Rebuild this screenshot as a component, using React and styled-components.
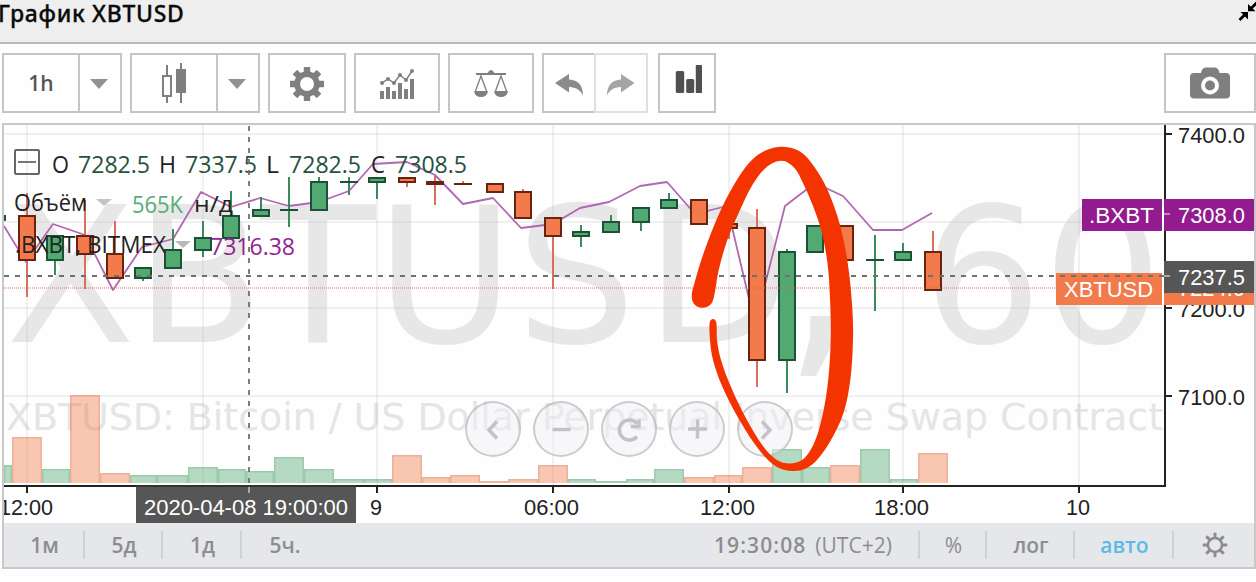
import React from 'react';
import styled, { createGlobalStyle } from 'styled-components';

const GlobalStyle = createGlobalStyle`
  * { box-sizing: border-box; }
  body { margin: 0; background: #fefefe; overflow: hidden; }
  button { font: inherit; padding: 0; margin: 0; background: none; border: 0; }
`;

const UI_FONT = '"Open Sans", "Noto Sans", sans-serif';
const AXIS_FONT = '"Liberation Sans", Arial, sans-serif';
const MARK_FONT = '"DejaVu Sans", Verdana, sans-serif';

const Page = styled.div`
  width: 1256px;
  height: 582px;
  display: flex;
  flex-direction: column;
  overflow: hidden;
  font-family: ${UI_FONT};
`;

const Header = styled.header`
  height: 44px;
  flex: none;
  display: flex;
  justify-content: space-between;
  background: #eee;
  border-bottom: 2px solid #b9b9b9;
`;

const Title = styled.h1`
  margin: 0 0 0 -2px;
  font: 500 23px/27px "Noto Sans", sans-serif;
  letter-spacing: 0.65px;
  color: #0b0b0b;
  -webkit-text-stroke: 0.3px #0b0b0b;
  white-space: nowrap;
`;

const Toolbar = styled.div`
  height: 79px;
  flex: none;
  display: flex;
  align-items: flex-start;
  gap: 8px;
  padding: 9px 0 0 2px;
`;

const Group = styled.div`
  display: flex;
  margin-left: ${(p) => p.$push || '0'};
`;

const ToolButton = styled.button`
  width: ${(p) => p.$w}px;
  height: 60px;
  display: flex;
  align-items: center;
  justify-content: center;
  border: 2px solid ${(p) => (p.$dim ? '#dedfe1' : '#c5c5c5')};
  color: ${(p) => (p.$dim ? '#a6a6a6' : '#7f7f7f')};
  & + & { margin-left: -2px; }
  svg { display: block; }
`;

const Interval = styled.span`
  font-size: 21px;
  font-weight: 600;
  line-height: 30px;
  color: #555;
`;

const Frame = styled.section`
  height: 446px;
  flex: none;
  margin-left: 2px;
  display: flex;
  flex-direction: column;
  border: 2px solid #c8c8c8;
`;

const ChartArea = styled.div`
  position: relative;
  height: 398px;
  flex: none;
  svg { display: block; }
`;

const Controls = styled.nav`
  position: absolute;
  left: 461px;
  top: 276px;
  display: flex;
  gap: 12px;
`;

const RoundButton = styled.button`
  width: 56px;
  height: 56px;
  border-radius: 50%;
  border: 2px solid rgba(150, 150, 155, 0.45);
  background: rgba(240, 240, 245, 0.5);
`;

const Annotation = styled.svg`
  position: absolute;
  inset: 0;
  pointer-events: none;
`;

const Footer = styled.footer`
  height: 44px;
  flex: none;
  display: flex;
  align-items: center;
  background: #e6e7eb;
  color: #8d8d90;
  font-size: 21px;
  line-height: 28px;
`;

const Cell = styled.span`
  width: ${(p) => p.$w}px;
  height: 28px;
  display: flex;
  align-items: center;
  justify-content: center;
  padding-left: 2px;
  font-weight: ${(p) => p.$weight || 600};
  color: ${(p) => (p.$active ? '#5bbae6' : 'inherit')};
  border-left: ${(p) => (p.$first ? '0' : '2px solid #cdd1d9')};
`;

const Clock = styled.span`
  margin-left: auto;
  width: 204px;
  display: flex;
  gap: 9px;
  white-space: nowrap;
  strong { font-weight: 600; letter-spacing: 1.1px; }
`;

const CANDLES = [
  [27, 'r', 215, 261, 193, 297], [55, 'g', 235, 261, 235, 275], [85, 'r', 235, 255, 200, 289],
  [115, 'r', 253, 279, 221, 279], [143, 'g', 267, 279, 267, 281], [173, 'g', 249, 269, 229, 269],
  [203, 'g', 237, 251, 221, 257], [231, 'g', 215, 239, 191, 239], [261, 'g', 209, 217, 197, 217],
  [289, 'g', 209, 211, 177, 227], [319, 'g', 181, 211, 177, 211], [349, 'g', 181, 183, 177, 195],
  [377, 'g', 177, 183, 177, 199], [407, 'r', 177, 183, 177, 187], [435, 'r', 181, 185, 176, 205],
  [463, 'r', 183, 185, 181, 185], [495, 'r', 183, 193, 183, 193], [523, 'r', 191, 219, 189, 219],
  [553, 'r', 217, 237, 217, 289], [581, 'g', 231, 237, 225, 247], [611, 'g', 221, 233, 215, 233],
  [641, 'g', 207, 223, 207, 231], [669, 'g', 199, 209, 193, 209], [699, 'r', 199, 225, 199, 225],
  [729, 'r', 223, 229, 223, 239], [757, 'r', 227, 361, 209, 387], [787, 'g', 251, 361, 249, 393],
  [815, 'g', 225, 253, 225, 253], [845, 'r', 225, 261, 225, 261], [875, 'g', 259, 261, 235, 311],
  [903, 'g', 251, 261, 243, 261], [933, 'r', 251, 291, 231, 291],
];

const VOLUMES = [
  [4, 12, 465, 'g'], [12, 42, 437, 'r'], [42, 70, 469, 'g'], [70, 100, 395, 'r'], [100, 130, 473, 'r'],
  [130, 157, 475, 'g'], [157, 188, 475, 'g'], [188, 218, 467, 'g'], [218, 246, 469, 'g'], [246, 274, 471, 'g'],
  [274, 304, 457, 'g'], [304, 334, 469, 'g'], [334, 364, 479, 'g'], [364, 392, 479, 'g'], [392, 422, 455, 'r'],
  [422, 450, 477, 'r'], [450, 480, 475, 'r'], [480, 508, 481, 'r'], [508, 538, 479, 'r'], [538, 568, 465, 'r'],
  [568, 596, 479, 'g'], [596, 626, 481, 'g'], [626, 654, 479, 'g'], [654, 684, 469, 'g'], [684, 714, 477, 'r'],
  [714, 742, 475, 'r'], [742, 772, 467, 'r'], [772, 802, 449, 'g'], [802, 830, 467, 'g'], [830, 860, 465, 'r'],
  [860, 890, 449, 'g'], [890, 918, 479, 'g'], [918, 948, 453, 'r'],
];

const INDEX_LINE =
  '4,226 26,262 53,224 85,235 113,290 142,247 173,239 201,192 231,207 260,198 289,206 319,202 349,191 373,164 407,162 435,175 463,204 493,198 521,228 553,224 580,208 609,202 640,186 667,182 695,214 727,206 755,324 785,206 815,183 843,196 873,230 902,230 932,213';

const RING = [
  [702.7, 307.8], [695, 305], [691.7, 297], [694.5, 283], [704, 252], [721.7, 208], [740, 175], [754, 158], [768, 149.5], [783, 146.800], [800, 151.5],
  [813, 165], [826.7, 188], [840, 225], [848, 265], [852.3, 308], [853, 340], [850.3, 380], [843.5, 413],
  [831, 440], [817, 460], [806, 468.5], [793, 471], [777, 467], [760, 451], [740, 421], [722.5, 387],
  [713, 360], [710, 340], [709.8, 322], [713, 319], [716.2, 322], [717, 340], [721, 360], [731, 387], [747, 420],
  [763, 446], [777, 460], [791, 463.5], [804, 458.5], [815, 441], [823, 413], [828.2, 380], [830.7, 340],
  [830.2, 303], [827.7, 265], [821.7, 232], [813, 206], [803, 183], [794, 167.5], [781.7, 160.7], [766.7, 167],
  [753, 184], [740, 210], [727, 241], [718.500, 271], [713.900, 297], [710.300, 304.800],
];

function smoothClosed(pts) {
  const n = pts.length;
  let d = `M${pts[0]}`;
  for (let i = 0; i < n; i++) {
    const a = pts[(i - 1 + n) % n], b = pts[i], c = pts[(i + 1) % n], e = pts[(i + 2) % n];
    const len = Math.hypot(c[0] - b[0], c[1] - b[1]);
    const handle = (from, to) => {
      const span = Math.hypot(to[0] - from[0], to[1] - from[1]);
      return [((to[0] - from[0]) / span) * (len / 3), ((to[1] - from[1]) / span) * (len / 3)];
    };
    const h1 = handle(a, c);
    const h2 = handle(b, e);
    d += `C${b[0] + h1[0]},${b[1] + h1[1]} ${c[0] - h2[0]},${c[1] - h2[1]} ${c}`;
  }
  return d + 'Z';
}

const Label = ({ x, y, w, size = 22, fill = '#222', font = AXIS_FONT, children, ...rest }) => (
  <text x={x} y={y} textLength={w} lengthAdjust="spacingAndGlyphs" fontSize={size} fill={fill} fontFamily={font} {...rest}>
    {children}
  </text>
);

const Candle = ({ data: [x, kind, top, bottom, high, low] }) => {
  const up = kind === 'g';
  const edge = up ? '#1b5136' : '#6a230f';
  return (
    <g>
      <rect x={x - 1} y={high} width="2" height={low - high} fill={up ? '#3a8a5c' : '#d8705d'} />
      <rect x={x - 9} y={top} width="18" height={bottom - top} fill={edge} />
      {bottom - top > 4 && (
        <rect x={x - 7} y={top + 2} width="14" height={bottom - top - 4} fill={up ? '#52a971' : '#f37a4b'} />
      )}
    </g>
  );
};

const Volume = ({ data: [a, b, top, kind] }) => {
  const color = kind === 'g' ? '82,169,113' : '243,122,75';
  return (
    <g>
      <rect x={a} y={top} width={b - a} height={483 - top} fill={`rgba(${color},0.42)`} />
      <path d={`M${a + 0.75},483V${top + 0.75}H${b - 0.75}V483`} fill="none" stroke={kind === 'g' ? '#69a683' : '#cf8667'} strokeOpacity="0.32" strokeWidth="1.5" />
    </g>
  );
};

function Chart() {
  return (
    <svg width="1250" height="398" viewBox="4 125 1250 398">
      <text y="342" fontSize="189" fill="#e7e7e7" fontFamily={MARK_FONT}>
        <tspan x="6 134.5 260 376 516 645">XBTUSD</tspan>
        <tspan x="781" y="347" fontSize="250">,</tspan>
        <tspan x="922 1042.5" y="342">60</tspan>
      </text>
      <Label x="6" y="430" w="1157" size="37" fill="#e5e5e5" font={MARK_FONT}>XBTUSD: Bitcoin / US Dollar Perpetual Inverse Swap Contract</Label>
      <g fill="#b4b4b8" fillOpacity="0.18">
        {[27, 203, 377, 553, 729, 903, 1079].map((x) => <rect key={x} x={x - 1} y="125" width="2" height="360" />)}
        {[133, 221, 307, 395].map((y) => <rect key={y} x="4" y={y} width="1160" height="2" />)}
      </g>
      {VOLUMES.map((v) => <Volume key={v[0]} data={v} />)}
      <polyline points={INDEX_LINE} fill="none" stroke="#b267b2" strokeWidth="1.8" strokeLinejoin="round" />
      <rect x="4" y="215" width="2" height="6" fill="#1b5136" />
      {CANDLES.map((c) => <Candle key={c[0]} data={c} />)}
      <path d="M4,288H1056" stroke="#e2604a" strokeOpacity="0.6" strokeWidth="1.6" strokeDasharray="1 1" />

      <g fill="none" strokeWidth="2">
        <rect x="15" y="150" width="24" height="24" rx="1" stroke="#666" />
        <path d="M18,162H36" stroke="#777" />
      </g>
      <g>
        <Label x="52" y="172.5" w="17" size="23.5" font={UI_FONT}>O</Label>
        <Label x="78" y="172.5" w="72" size="23.5" fill="#24533b" font={UI_FONT}>7282.5</Label>
        <Label x="159" y="172.5" w="17" size="23.5" font={UI_FONT}>H</Label>
        <Label x="185" y="172.5" w="72" size="23.5" fill="#24533b" font={UI_FONT}>7337.5</Label>
        <Label x="266" y="172.5" w="13" size="23.5" font={UI_FONT}>L</Label>
        <Label x="289" y="172.5" w="72" size="23.5" fill="#24533b" font={UI_FONT}>7282.5</Label>
        <Label x="371" y="172.5" w="14" size="23.5" font={UI_FONT}>C</Label>
        <Label x="395" y="172.5" w="72" size="23.5" fill="#24533b" font={UI_FONT}>7308.5</Label>
        <Label x="14" y="211" w="73" size="23" font={UI_FONT}>Объём</Label>
        <path d="M96,199H112L104,206Z" fill="#c4c4c4" />
        <Label x="132" y="212.5" w="51" size="23.5" fill="#58ad79" font={UI_FONT}>565K</Label>
        <Label x="194" y="212" w="39" size="22.5" font={UI_FONT}>н/д</Label>
        <Label x="15" y="253" w="151" size="23" font={UI_FONT}>.BXBT, BITMEX</Label>
        <path d="M175,241H191L183,248Z" fill="#b9b9b9" />
        <Label x="210" y="254.5" w="85" size="23.5" fill="#922492" font={UI_FONT}>7316.38</Label>
      </g>

      <g fill="#222">
        <rect x="1164" y="125" width="2" height="362" />
        <rect x="4" y="485" width="1162" height="2" />
        {[27, 377, 553, 729, 903, 1079].map((x) => <rect key={x} x={x - 1} y="487" width="2" height="6" />)}
        {[133, 307, 395].map((y) => <rect key={y} x="1166" y={y} width="6" height="2" />)}
      </g>
      <Label x="1178" y="142.5" w="67">7400.0</Label>
      <Label x="1178" y="317" w="67">7200.0</Label>
      <Label x="1178" y="405" w="67">7100.0</Label>
      <Label x="-1" y="515" w="54">12:00</Label>
      <Label x="370" y="515" w="12">9</Label>
      <Label x="524" y="515" w="55">06:00</Label>
      <Label x="700" y="515" w="55">12:00</Label>
      <Label x="874" y="515" w="55">18:00</Label>
      <Label x="1066" y="515" w="24">10</Label>

      <rect x="1082" y="199" width="80" height="32" fill="#921b8f" />
      <rect x="1162" y="199" width="2" height="32" fill="#fff" />
      <rect x="1164" y="199" width="90" height="32" fill="#921b8f" />
      <rect x="1164" y="213" width="6" height="2" fill="#c483c2" />
      <Label x="1089" y="222.5" w="65" fill="#fff">.BXBT</Label>
      <Label x="1178" y="222.5" w="67" fill="#fff">7308.0</Label>

      <rect x="1056" y="273" width="106" height="32" fill="#f37a4b" />
      <rect x="1162" y="261" width="2" height="44" fill="#fff" />
      <rect x="1164" y="273" width="90" height="32" fill="#f37a4b" />
      <Label x="1064" y="296.5" w="89" fill="#fff">XBTUSD</Label>
      <Label x="1178" y="296" w="67" fill="#fff">7224.0</Label>

      <g fill="none" stroke="#6f706f" strokeWidth="1.8" strokeDasharray="5 6">
        <path d="M4,276H1164" />
        <path d="M249,126V484" />
      </g>
      <rect x="1164" y="261" width="90" height="32" fill="#565656" />
      <rect x="1164" y="275" width="6" height="2" fill="#aaa" />
      <Label x="1178" y="284.5" w="67" fill="#fff">7237.5</Label>
      <rect x="136" y="485" width="220" height="38" fill="#565656" />
      <rect x="136" y="485" width="220" height="2" fill="#333" />
      <rect x="248" y="487" width="2" height="6" fill="#aaa" />
      <Label x="144" y="515" w="204" fill="#fff">2020-04-08 19:00:00</Label>
    </svg>
  );
}

const CONTROL_ICONS = [
  ['Назад', 'M30,18.5L22,27L30,35.5'],
  ['Уменьшить', 'M17.5,26.5H35.5'],
  ['Сбросить', 'M34,20.5A10,10 0 1 0 34,33.5M28,23.5H36V16.5'],
  ['Увеличить', 'M17,26H36M26.5,16.5V35.5'],
  ['Вперёд', 'M23,18.5L31,27L23,35.5'],
];

const Arrow = () => (
  <svg width="20" height="14" viewBox="0 0 20 14"><path d="M0,3H18L9,13Z" fill="#929292" /></svg>
);

const Gear = ({ size, inner, outer, hole, tooth, dy = 0 }) => (
  <svg width={size} height={size} viewBox={`-18 ${-18 - dy} 36 36`}>
    <g fill="currentColor">
      {[0, 45, 90, 135].map((a) => (
        <rect key={a} x={-tooth / 2} y={-outer} width={tooth} height={outer * 2} rx="0.6" transform={`rotate(${a})`} />
      ))}
      <circle r={inner} />
    </g>
    <circle r={hole} fill={size > 30 ? '#fefefe' : '#e6e7eb'} />
  </svg>
);

export default function App() {
  return (
    <Page>
      <GlobalStyle />
      <Header>
        <Title>График XBTUSD</Title>
        <svg width="18" height="24" viewBox="1238 0 18 24">
          <path d="M1248,4V11.3H1255.5ZM1240.5,12H1248V19.5Z" fill="#000" />
          <path d="M1257,2.5L1250,9.5M1239.5,20L1246,13.5" stroke="#000" strokeWidth="2.8" />
        </svg>
      </Header>
      <Toolbar>
        <Group>
          <ToolButton $w={78}><Interval>1h</Interval></ToolButton>
          <ToolButton $w={44}><Arrow /></ToolButton>
        </Group>
        <Group>
          <ToolButton $w={88}>
            <svg width="26" height="42" viewBox="161 62 26 42">
              <path d="M163,76H171V96H163ZM167,65V76M167,96V103M181,63V103" fill="none" stroke="#7f7f7f" strokeWidth="2" />
              <rect x="176" y="69" width="10" height="24" fill="#7f7f7f" />
            </svg>
          </ToolButton>
          <ToolButton $w={44}><Arrow /></ToolButton>
        </Group>
        <ToolButton $w={78}><Gear size={36} inner={12.8} outer={17} hole={7} tooth={6.4} dy={1} /></ToolButton>
        <Group>
          <ToolButton $w={86}>
            <svg width="36" height="32" viewBox="379 67 36 32">
              <path d="M380,99V91H384V99ZM386,99V87H390V99ZM392,99V91H396V99ZM398,99V83H402V99ZM404,99V89H408V99ZM410,99V79H414V99Z" fill="#7f7f7f" />
              <path d="M382,83L388,79L394,83L400,75L406,80L412,71" fill="none" stroke="#7f7f7f" strokeWidth="1.5" />
              {[[382, 83], [388, 79], [394, 83], [400, 75], [406, 80], [412, 71]].map(([x, y]) => <circle key={x} cx={x} cy={y} r="2" fill="#7f7f7f" />)}
            </svg>
          </ToolButton>
        </Group>
        <Group>
          <ToolButton $w={86}>
            <svg width="36" height="30" viewBox="473 68 36 30">
              <path d="M476,73H487.5Q491,67 494.5,73H506V75H476Z" fill="#7f7f7f" />
              <path d="M475.5,91L481,76L486.5,91M495.5,91L501,76L506.5,91" fill="none" stroke="#7f7f7f" strokeWidth="1.3" />
              <path d="M474,91H488Q487,97 481,97Q475,97 474,91ZM494,91H508Q507,97 501,97Q495,97 494,91Z" fill="#7f7f7f" />
            </svg>
          </ToolButton>
        </Group>
        <Group>
          <ToolButton $w={54}>
            <svg width="30" height="26" viewBox="554 70 30 26"><path d="M555,83L569,74V79.5C578,80 583,85 583,95.5C580.5,90 576,87.3 569,87V92.5Z" fill="#8a8b8c" /></svg>
          </ToolButton>
          <ToolButton $w={54} $dim>
            <svg width="30" height="26" viewBox="606 70 30 26"><path d="M634.5,83L621,74V79.5C612,80 607,85 607,95.5C609.5,90 614,87.3 621,87V92.5Z" fill="#a5a5a5" /></svg>
          </ToolButton>
        </Group>
        <Group $push="2px">
          <ToolButton $w={58}>
            <svg width="32" height="36" viewBox="671 65 32 36">
              <rect x="675.8" y="71" width="8.4" height="22" rx="1.5" fill="#4e5052" />
              <rect x="686.2" y="79" width="8" height="14" rx="1.5" fill="#4e5052" />
              <rect x="695.8" y="65" width="6.2" height="28" rx="0.5" fill="#4e5052" />
            </svg>
          </ToolButton>
        </Group>
        <Group $push="auto">
          <ToolButton $w={92}>
            <svg width="40" height="32" viewBox="1190 67 40 32">
              <path d="M1194,73H1201Q1202,67.5 1206,67.5H1214.5Q1218.5,67.5 1219.5,73H1226Q1230,73 1230,77V94.5Q1230,98.500 1226,98.500H1194Q1190,98.500 1190,94.500V77Q1190,73 1194,73Z" fill="#7f7f7f" />
              <circle cx="1210" cy="85.5" r="7" fill="#7f7f7f" stroke="#fefefe" strokeWidth="4" />
            </svg>
          </ToolButton>
        </Group>
      </Toolbar>
      <Frame>
        <ChartArea>
          <Chart />
          <Controls>
            {CONTROL_ICONS.map(([name, d]) => (
              <RoundButton key={name} aria-label={name}>
                <svg width="52" height="52" viewBox="0 0 52 52"><path d={d} fill="none" stroke="#c3c3c7" strokeWidth="3.5" /></svg>
              </RoundButton>
            ))}
          </Controls>
          <Annotation width="1250" height="398" viewBox="4 125 1250 398">
            <path d={smoothClosed(RING)} fill="#f43400" />
          </Annotation>
        </ChartArea>
        <Footer>
          <Cell $w={79} $first>1м</Cell>
          <Cell $w={78}>5д</Cell>
          <Cell $w={79}>1д</Cell>
          <Cell $w={86}>5ч.</Cell>
          <Clock><strong>19:30:08</strong><span>(UTC+2)</span></Clock>
          <Cell $w={67} $weight={400}>%</Cell>
          <Cell $w={88}>лог</Cell>
          <Cell $w={99} $active>авто</Cell>
          <Cell $w={82}><Gear size={26} inner={11.5} outer={17} hole={8} tooth={4} /></Cell>
        </Footer>
      </Frame>
    </Page>
  );
}
